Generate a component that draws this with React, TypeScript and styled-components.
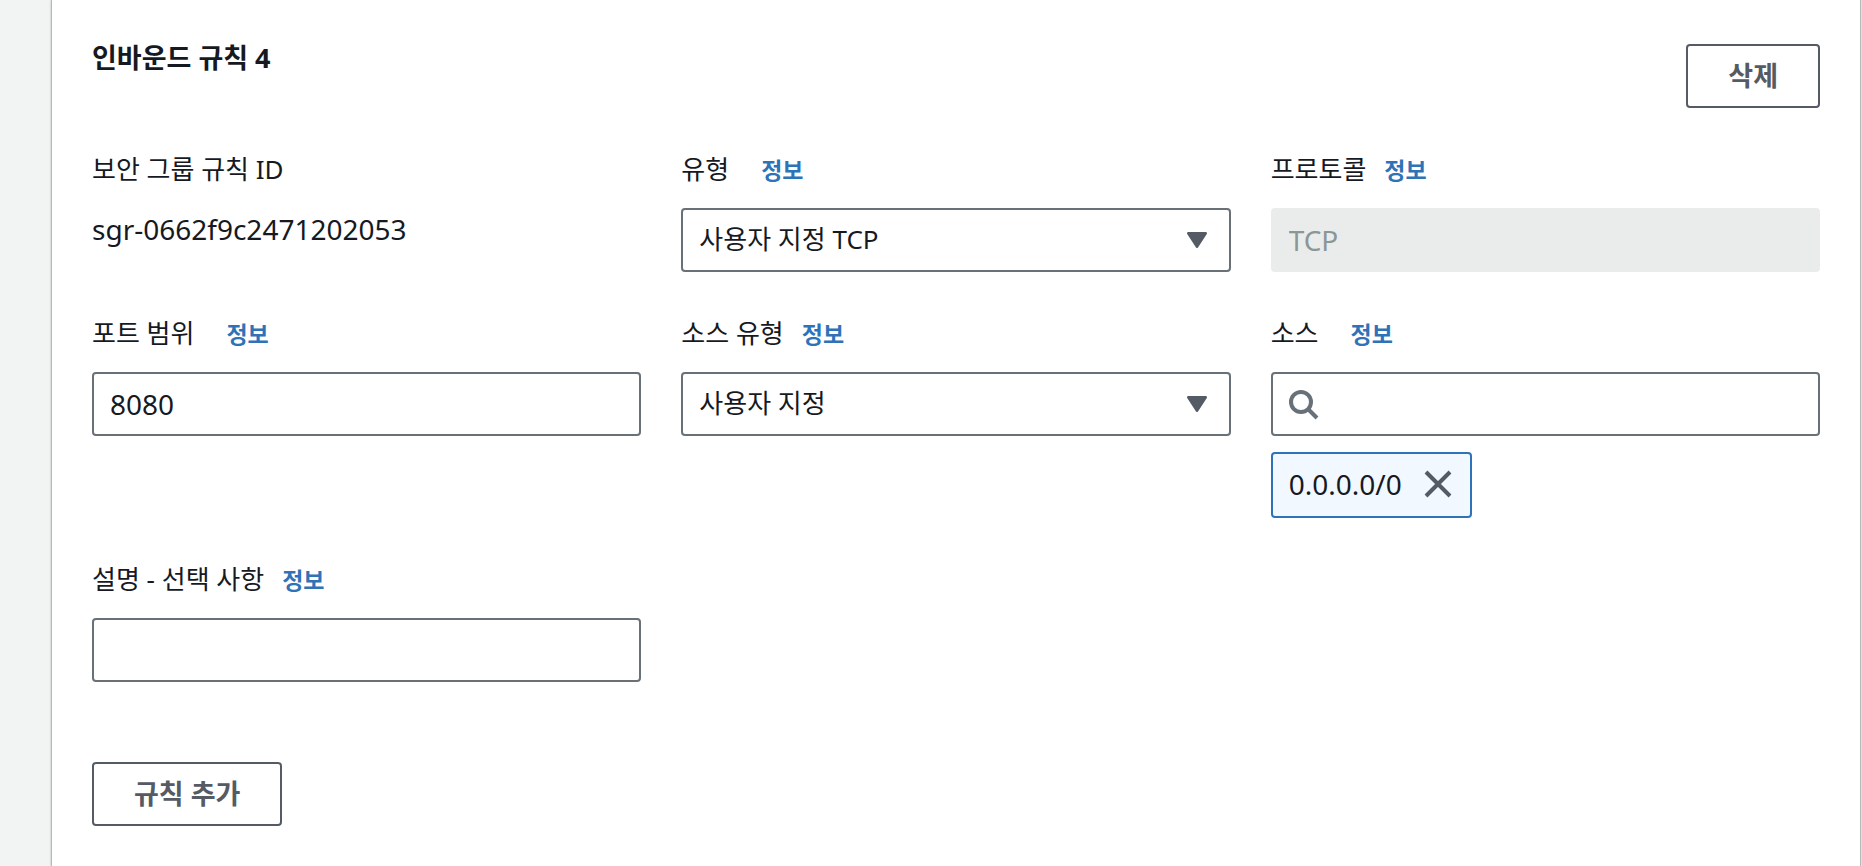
import React, { useState } from "react";
import styled, { createGlobalStyle } from "styled-components";

const color = {
  page: "#f2f3f3",
  panel: "#ffffff",
  edge: "#b4b9b9",
  text: "#16191f",
  border: "#687078",
  button: "#545b64",
  link: "#2e73b8",
  tag: "#f1f8ff",
  disabled: "#eaeceb",
  disabledText: "#8a9796",
};

const GlobalStyle = createGlobalStyle`
  *, *::before, *::after { box-sizing: border-box; }
  body {
    margin: 0;
    background: ${color.page};
    color: ${color.text};
    font-family: "Noto Sans", "Noto Sans CJK KR", sans-serif;
    font-size: 26px;
    line-height: 44px;
  }
`;

const Page = styled.div`
  display: flex;
  min-height: 100vh;
  padding: 0 1px 0 51px;
`;

const Panel = styled.main`
  flex: 1;
  min-width: 0;
  padding: 36px 40px 40px;
  background: ${color.panel};
  border: solid ${color.edge};
  border-width: 0 1px;
  box-shadow: 0 0 2px ${color.edge};
`;

const RuleHeader = styled.header`
  display: flex;
  justify-content: space-between;
  align-items: flex-start;
  margin-bottom: 40px;
`;

const RuleTitle = styled.h2`
  margin: 0;
  font-size: 27px;
  font-weight: 700;
`;

const HeaderActions = styled.div`
  display: flex;
  padding-top: 8px;
`;

const Button = styled.button`
  height: 64px;
  padding: 0 40px;
  border: 2px solid ${color.button};
  border-radius: 4px;
  background: ${color.panel};
  color: ${color.button};
  font: inherit;
  font-size: 27px;
  font-weight: 700;
  line-height: 44px;
  cursor: pointer;
`;

const RuleGrid = styled.div`
  display: grid;
  grid-template-columns: repeat(3, minmax(0, 1fr));
  gap: 40px;
  margin-bottom: 80px;
`;

const FieldBox = styled.div`
  display: flex;
  flex-direction: column;
  gap: 16px;
`;

const LabelRow = styled.div<{ $wide?: boolean }>`
  display: flex;
  align-items: baseline;
  gap: ${(p) => (p.$wide ? 32 : 18)}px;
  height: 44px;
  line-height: 42px;
`;

const InfoLink = styled.a`
  color: ${color.link};
  font-size: 23px;
  font-weight: 700;
  text-decoration: none;
`;

const Value = styled.output`
  font-size: 28px;
  line-height: 42px;
`;

const TextInput = styled.input`
  width: 100%;
  height: 64px;
  padding: 0 16px;
  border: 2px solid ${color.border};
  border-radius: 4px;
  background: ${color.panel};
  color: ${color.text};
  font: inherit;
  font-size: 28px;

  &:disabled {
    border-color: ${color.disabled};
    background: ${color.disabled};
    color: ${color.disabledText};
  }
`;

const SelectBox = styled.div`
  position: relative;
`;

const SelectControl = styled.select`
  display: block;
  width: 100%;
  height: 64px;
  padding: 0 64px 2px 16px;
  appearance: none;
  border: 2px solid ${color.border};
  border-radius: 4px;
  background: ${color.panel};
  color: ${color.text};
  font: inherit;
`;

const SelectArrow = styled.svg`
  position: absolute;
  top: 24px;
  right: 24px;
  width: 20px;
  height: 16px;
  pointer-events: none;
  fill: ${color.button};
`;

const SearchBox = styled.div`
  position: relative;
`;

const SearchInput = styled(TextInput)`
  display: block;
  padding-left: 60px;
`;

const SearchIcon = styled.svg`
  position: absolute;
  top: 16px;
  left: 16px;
  width: 32px;
  height: 32px;
  pointer-events: none;
  fill: none;
  stroke: ${color.border};
  stroke-width: 4;
`;

const Tag = styled.div`
  display: flex;
  align-items: center;
  align-self: flex-start;
  gap: 20px;
  height: 66px;
  padding: 0 16px 2px;
  border: 2px solid ${color.link};
  border-radius: 4px;
  background: ${color.tag};
  font-size: 28px;
`;

const TagRemove = styled.button`
  display: flex;
  padding: 0;
  border: 0;
  background: none;
  cursor: pointer;

  svg {
    width: 32px;
    height: 32px;
    fill: none;
    stroke: ${color.button};
    stroke-width: 4;
  }
`;

type FieldProps = {
  id: string;
  label: string;
  wide?: boolean;
  info?: boolean;
  children: React.ReactNode;
};

function Field({ id, label, wide, info = true, children }: FieldProps) {
  return (
    <FieldBox>
      <LabelRow $wide={wide}>
        <label htmlFor={id}>{label}</label>
        {info && <InfoLink href="#info">정보</InfoLink>}
      </LabelRow>
      {children}
    </FieldBox>
  );
}

function Select({ id, options }: { id: string; options: string[] }) {
  return (
    <SelectBox>
      <SelectControl id={id}>
        {options.map((option) => (
          <option key={option}>{option}</option>
        ))}
      </SelectControl>
      <SelectArrow viewBox="0 0 20 16" aria-hidden="true">
        <path d="M1.2 0h17.6a1.2 1.2 0 0 1 1 1.9l-8.8 13.5a1.2 1.2 0 0 1-2 0L.2 1.9A1.2 1.2 0 0 1 1.2 0z" />
      </SelectArrow>
    </SelectBox>
  );
}

export default function App() {
  const [port, setPort] = useState("8080");
  const [sources, setSources] = useState(["0.0.0.0/0"]);

  return (
    <>
      <GlobalStyle />
      <Page>
        <Panel>
          <RuleHeader>
            <RuleTitle>인바운드 규칙 4</RuleTitle>
            <HeaderActions>
              <Button type="button">삭제</Button>
            </HeaderActions>
          </RuleHeader>
          <RuleGrid>
            <Field id="rule-id" label="보안 그룹 규칙 ID" info={false}>
              <Value id="rule-id">sgr-0662f9c2471202053</Value>
            </Field>
            <Field id="type" label="유형" wide>
              <Select id="type" options={["사용자 지정 TCP"]} />
            </Field>
            <Field id="protocol" label="프로토콜">
              <TextInput id="protocol" value="TCP" disabled />
            </Field>
            <Field id="port" label="포트 범위" wide>
              <TextInput
                id="port"
                value={port}
                onChange={(e) => setPort(e.target.value)}
              />
            </Field>
            <Field id="source-type" label="소스 유형">
              <Select id="source-type" options={["사용자 지정"]} />
            </Field>
            <Field id="source" label="소스" wide>
              <SearchBox>
                <SearchInput id="source" type="text" />
                <SearchIcon viewBox="0 0 32 32" aria-hidden="true">
                  <circle cx="14" cy="14" r="10" />
                  <path d="M21 21l9 9" />
                </SearchIcon>
              </SearchBox>
              {sources.map((source) => (
                <Tag key={source}>
                  {source}
                  <TagRemove
                    type="button"
                    aria-label={`${source} 제거`}
                    onClick={() =>
                      setSources(sources.filter((s) => s !== source))
                    }
                  >
                    <svg viewBox="0 0 32 32" aria-hidden="true">
                      <path d="M4 4l24 24M28 4L4 28" />
                    </svg>
                  </TagRemove>
                </Tag>
              ))}
            </Field>
            <Field id="description" label="설명 - 선택 사항">
              <TextInput id="description" type="text" />
            </Field>
          </RuleGrid>
          <Button type="button">규칙 추가</Button>
        </Panel>
      </Page>
    </>
  );
}
